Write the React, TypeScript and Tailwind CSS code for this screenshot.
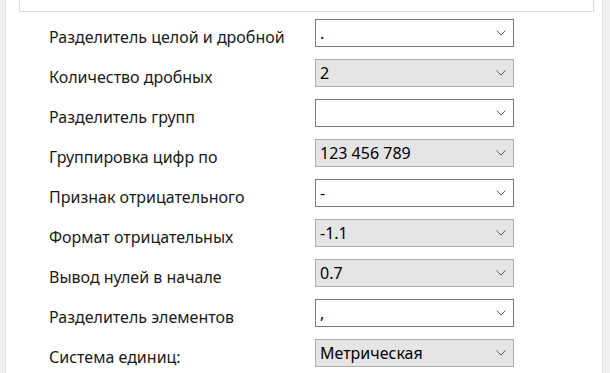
const rows: { label: string; value: string; editable: boolean }[] = [
  { label: "Разделитель целой и дробной", value: ".", editable: true },
  { label: "Количество дробных", value: "2", editable: false },
  { label: "Разделитель групп", value: "", editable: true },
  { label: "Группировка цифр по", value: "123 456 789", editable: false },
  { label: "Признак отрицательного", value: "-", editable: true },
  { label: "Формат отрицательных", value: "-1.1", editable: false },
  { label: "Вывод нулей в начале", value: "0.7", editable: false },
  { label: "Разделитель элементов", value: ",", editable: true },
  { label: "Система единиц:", value: "Метрическая", editable: false },
];

const Chevron = () => (
  <svg width="10" height="6" viewBox="0 0 10 6" className="shrink-0">
    <path d="M0.5 0.5 L5 5 L9.5 0.5" fill="none" stroke="#606060" strokeWidth="1" />
  </svg>
);

const Combo: React.FC<{ value: string; editable: boolean }> = ({ value, editable }) => {
  const cls = editable
    ? "bg-white border-[#7a7a7a]"
    : "bg-[#e5e5e5] border-[#adadad]";
  return (
    <div className={`flex items-center shrink-0 w-[199px] h-[28px] border ${cls} pl-[4px] pr-[7px]`}>
      <span className="flex-1 text-[16px] text-black leading-[22px] whitespace-nowrap">{value}</span>
      <Chevron />
    </div>
  );
};

export default function App() {
  return (
    <div
      className="w-[610px] h-[373px] bg-white flex overflow-hidden"
      style={{ fontFamily: '"Segoe UI", "Noto Sans", "Open Sans", sans-serif' }}
    >
      <div className="w-[6px] shrink-0 bg-[#f0f0f0] border-r border-[#e3e3e3]" />
      <div className="flex-1 flex flex-col">
        <div className="ml-[13px] mr-[8px] h-[12px] border border-t-0 border-[#dcdcdc]" />
        <div className="flex flex-col gap-[12px] pt-[7px]">
          {rows.map((r, i) => (
            <div key={i} className="flex items-center h-[28px]">
              <div className="w-[309px] shrink-0 pl-[43px] pt-[8px] text-[16px] text-[#1a1a1a] leading-[20px] whitespace-nowrap">
                {r.label}
              </div>
              <Combo value={r.value} editable={r.editable} />
            </div>
          ))}
        </div>
      </div>
      <div className="w-[8px] shrink-0 bg-[#f0f0f0] border-l border-[#e3e3e3]" />
    </div>
  );
}
